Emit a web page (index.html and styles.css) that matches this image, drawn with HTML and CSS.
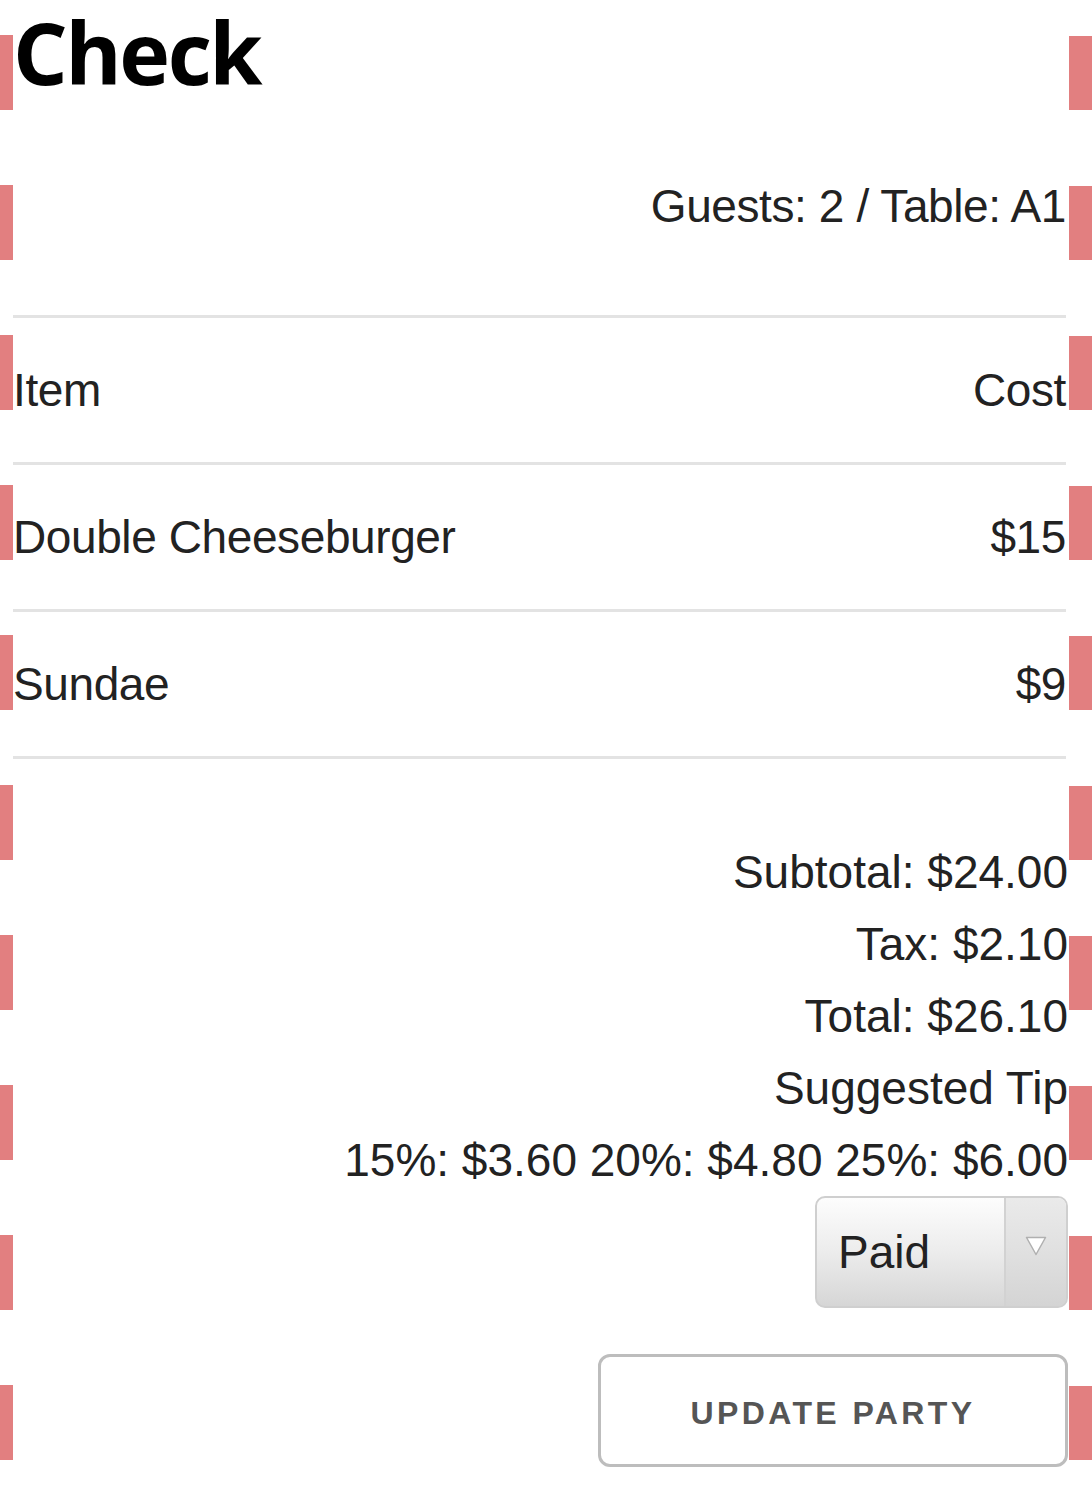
FILE: index.html
```html
<!DOCTYPE html>
<html>
<head>
<meta charset="utf-8">
<link rel="stylesheet" href="styles.css">
</head>
<body>
<div class="page">
  <h1 class="title">Check</h1>
  <div class="meta">Guests: 2 / Table: A1</div>
  <div class="items">
    <div class="row"><span>Item</span><span>Cost</span></div>
    <div class="row"><span>Double Cheeseburger</span><span>$15</span></div>
    <div class="row"><span>Sundae</span><span>$9</span></div>
  </div>
  <div class="totals">
    <div class="line">Subtotal: $24.00</div>
    <div class="line">Tax: $2.10</div>
    <div class="line">Total: $26.10</div>
    <div class="line">Suggested Tip</div>
    <div class="line">15%: $3.60 20%: $4.80 25%: $6.00</div>
  </div>
  <div class="actions">
    <div class="select">
      <span class="select-value">Paid</span>
      <span class="select-arrow">
        <svg width="22" height="20" viewBox="0 0 22 20"><path d="M1.5 1.5 L20.5 1.5 L11 18.5 Z" fill="#fff" stroke="#b0b0b0" stroke-width="1.5" stroke-linejoin="round"/></svg>
      </span>
    </div>
    <button class="btn">UPDATE PARTY</button>
  </div>
</div>
</body>
</html>
```
FILE: styles.css
```css
html, body {
  margin: 0;
  padding: 0;
  background: #fff;
}
.page {
  width: 1092px;
  height: 1499px;
  box-sizing: border-box;
  padding: 0 26px 0 13px;
  font-family: "Liberation Sans", Arial, sans-serif;
  color: #222;
  background-image:
    repeating-linear-gradient(to bottom, transparent 0, transparent 35px, #e27f80 35px, #e27f80 110px, transparent 110px, transparent 150px),
    repeating-linear-gradient(to bottom, transparent 0, transparent 36px, #e27f80 36px, #e27f80 110px, transparent 110px, transparent 150px);
  background-size: 13px 150px, 23px 150px;
  background-position: left top, right top;
  background-repeat: repeat-y, repeat-y;
}
.title {
  margin: 0;
  padding-top: 1px;
  font-family: "Open Sans", sans-serif;
  font-weight: 700;
  font-size: 86px;
  line-height: 101px;
  color: #000;
  letter-spacing: -2.5px;
}
.meta {
  margin-top: 76px;
  text-align: right;
  font-size: 46px;
  letter-spacing: -0.4px;
  line-height: 56px;
  padding-bottom: 81px;
  border-bottom: 3px solid #e3e3e3;
}
.row {
  display: flex;
  justify-content: space-between;
  align-items: center;
  height: 144px;
  font-size: 46px;
  letter-spacing: -0.4px;
  border-bottom: 3px solid #e3e3e3;
}
.totals {
  padding-top: 77px;
  text-align: right;
  font-size: 46px;
  margin-right: -2px;
}
.line {
  line-height: 72px;
}
.actions {
  display: flex;
  flex-direction: column;
  align-items: flex-end;
  margin-right: -2px;
}
.select {
  margin-top: 0;
  width: 253px;
  height: 112px;
  box-sizing: border-box;
  border: 2px solid #cfcfcf;
  border-radius: 10px;
  background: linear-gradient(to bottom, #fdfdfd 0%, #ececec 50%, #d6d6d6 100%);
  display: flex;
  align-items: stretch;
}
.select-value {
  flex: 1;
  display: flex;
  align-items: center;
  padding-left: 21px;
  font-size: 46px;
  color: #222;
}
.select-arrow {
  width: 62px;
  border-left: 2px solid #d2d2d2;
  background: linear-gradient(to bottom, #eaeaea 0%, #e0e0e0 50%, #d4d4d4 100%);
  display: flex;
  justify-content: center;
  padding-top: 38px;
  box-sizing: border-box;
  border-radius: 0 8px 8px 0;
}
.btn {
  margin-top: 46px;
  width: 470px;
  height: 113px;
  box-sizing: border-box;
  background: #fff;
  border: 3px solid #bdbdbd;
  border-radius: 12px;
  font-family: "Liberation Sans", Arial, sans-serif;
  font-weight: 700;
  font-size: 32px;
  letter-spacing: 3.4px;
  color: #555;
  padding: 6px 0 0 0;
}
```
